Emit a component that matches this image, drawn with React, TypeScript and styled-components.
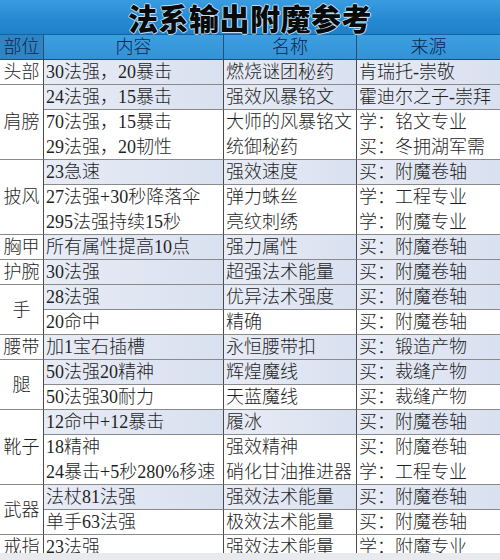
import { Fragment } from 'react';
import { createGlobalStyle, styled } from 'styled-components';

type Row = [string, string, string];

interface Group {
  part: string;
  rows: Row[];
}

const GROUPS: Group[] = [
  { part: '头部', rows: [['30法强，20暴击', '燃烧谜团秘药', '肯瑞托-崇敬']] },
  {
    part: '肩膀',
    rows: [
      ['24法强，15暴击', '强效风暴铭文', '霍迪尔之子-崇拜'],
      ['70法强，15暴击', '大师的风暴铭文', '学：铭文专业'],
      ['29法强，20韧性', '统御秘药', '买：冬拥湖军需'],
    ],
  },
  {
    part: '披风',
    rows: [
      ['23急速', '强效速度', '买：附魔卷轴'],
      ['27法强+30秒降落伞', '弹力蛛丝', '学：工程专业'],
      ['295法强持续15秒', '亮纹刺绣', '学：附魔专业'],
    ],
  },
  { part: '胸甲', rows: [['所有属性提高10点', '强力属性', '买：附魔卷轴']] },
  { part: '护腕', rows: [['30法强', '超强法术能量', '买：附魔卷轴']] },
  {
    part: '手',
    rows: [
      ['28法强', '优异法术强度', '买：附魔卷轴'],
      ['20命中', '精确', '买：附魔卷轴'],
    ],
  },
  { part: '腰带', rows: [['加1宝石插槽', '永恒腰带扣', '买：锻造产物']] },
  {
    part: '腿',
    rows: [
      ['50法强20精神', '辉煌魔线', '买：裁缝产物'],
      ['50法强30耐力', '天蓝魔线', '买：裁缝产物'],
    ],
  },
  {
    part: '靴子',
    rows: [
      ['12命中+12暴击', '履冰', '买：附魔卷轴'],
      ['18精神', '强效精神', '买：附魔卷轴'],
      ['24暴击+5秒280%移速', '硝化甘油推进器', '学：工程专业'],
    ],
  },
  {
    part: '武器',
    rows: [
      ['法杖81法强', '强效法术能量', '买：附魔卷轴'],
      ['单手63法强', '极效法术能量', '买：附魔卷轴'],
    ],
  },
  { part: '戒指', rows: [['23法强', '强效法术能量', '学：附魔专业']] },
];

// the last group is not shaded in the picture
const UNSHADED = new Set(['戒指']);

export default function App() {
  return (
    <>
      <GlobalStyle />
      <Page>
        <Title>法系输出附魔参考</Title>
        <Table>
          <HeadCell $first>部位</HeadCell>
          <HeadCell>内容</HeadCell>
          <HeadCell>名称</HeadCell>
          <HeadCell $last>来源</HeadCell>
          {GROUPS.map((group) => (
            <Fragment key={group.part}>
              <PartCell $span={group.rows.length}>{group.part}</PartCell>
              {group.rows.map((row, i) => {
                const shaded = i === 0 && !UNSHADED.has(group.part);
                const line = shaded || i === group.rows.length - 1;

                return row.map((text, col) => (
                  <Cell
                    key={`${group.part}-${i}-${col}`}
                    $shade={shaded}
                    $line={line}
                    $last={col === 2}
                  >
                    {text}
                  </Cell>
                ));
              })}
            </Fragment>
          ))}
        </Table>
      </Page>
    </>
  );
}

const GlobalStyle = createGlobalStyle`
  html, body {
    margin: 0;
    padding: 0;
    background: #e8eaed;
  }

  body {
    font-family: "Liberation Serif", "Noto Sans CJK SC", serif;
    color: #1f1f1f;
  }
`;

const Page = styled.div`
  width: 500px;
  height: 553px;
  overflow: hidden;
  background: #ffffff;
`;

const Title = styled.h1`
  margin: 0;
  height: 35px;
  box-sizing: border-box;
  display: flex;
  align-items: center;
  justify-content: center;
  border-bottom: 1px solid #17619e;
  background: linear-gradient(180deg, #3a9ce0 0%, #2589d2 60%, #1f80c8 100%);
  font-family: "Noto Sans CJK SC", sans-serif;
  font-size: 30px;
  font-weight: 900;
  line-height: 1;
  color: #0a0a0a;
  letter-spacing: 0.5px;
  text-shadow:
    1px 0 0 #bfe0f7,
    -1px 0 0 #bfe0f7,
    0 1px 0 #bfe0f7,
    0 -1px 0 #bfe0f7;
`;

const Table = styled.div`
  display: grid;
  grid-template-columns: 44px 180px 133px 143px;
  grid-auto-rows: 25px;
  font-size: 18px;
  font-weight: 300;
  line-height: 24px;
`;

const HeadCell = styled.div<{ $first?: boolean; $last?: boolean }>`
  box-sizing: border-box;
  text-align: center;
  color: #10264a;
  border-bottom: 1px solid #1d4f7e;
  border-right: ${({ $last }) => ($last ? 'none' : '1px solid #2a4e70')};
  background: ${({ $first }) =>
    $first
      ? '#2f84c4'
      : 'linear-gradient(180deg, #3d9ee0 0%, #3192d7 100%)'};
`;

const PartCell = styled.div<{ $span: number }>`
  grid-row: span ${({ $span }) => $span};
  box-sizing: border-box;
  display: flex;
  align-items: center;
  justify-content: center;
  border-right: 1px solid #4a4a4a;
  border-bottom: 1px solid #8a8a8a;
  background: #ffffff;
  white-space: nowrap;
`;

const Cell = styled.div<{ $shade: boolean; $line: boolean; $last: boolean }>`
  box-sizing: border-box;
  padding-left: 2px;
  white-space: nowrap;
  overflow: hidden;
  border-right: ${({ $last }) => ($last ? 'none' : '1px solid #4a4a4a')};
  border-bottom: ${({ $line }) => ($line ? '1px solid #8a8a8a' : 'none')};
  background: ${({ $shade }) =>
    $shade ? 'linear-gradient(90deg, #e8ecf6 0%, #d9e0ef 100%)' : '#ffffff'};
`;
